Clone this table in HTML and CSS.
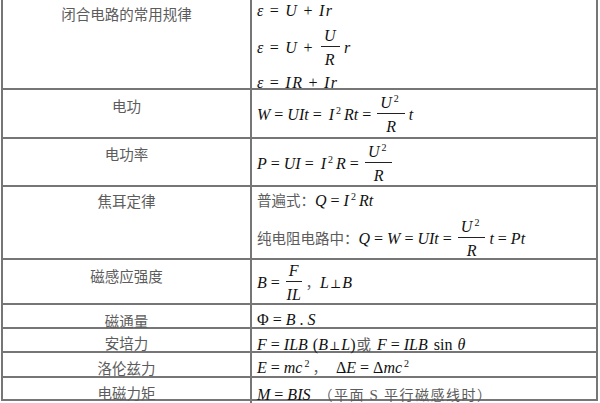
FILE: index.html
```html
<!DOCTYPE html>
<html>
<head>
<meta charset="utf-8">
<link rel="stylesheet" href="styles.css">
</head>
<body>
<div class="tbl">
  <div class="row r1">
    <div class="lc p6">闭合电路的常用规律</div>
    <div class="rc m t2 wide">
      <div class="ln"><i>ε</i><span class="op">=</span><i>U</i><span class="op">+</span><i>Ir</i></div>
      <div class="ln g9"><i>ε</i><span class="op">=</span><i>U</i><span class="op">+</span><span class="frac"><span class="num"><i>U</i></span><span class="den"><i>R</i></span></span><i>r</i></div>
      <div class="ln g7"><i>ε</i><span class="op">=</span><i>IR</i><span class="op">+</span><i>Ir</i></div>
    </div>
  </div>
  <div class="row r2">
    <div class="lc p8">电功</div>
    <div class="rc m t6">
      <div class="ln"><i>W</i><span class="op">=</span><i>UIt</i><span class="op">=</span><i class="pre">I</i><sup class="s">2</sup><i>Rt</i><span class="op">=</span><span class="frac"><span class="num"><i>U</i><sup class="s">2</sup></span><span class="den"><i>R</i></span></span><i>t</i></div>
    </div>
  </div>
  <div class="row r3">
    <div class="lc p7">电功率</div>
    <div class="rc m t6">
      <div class="ln"><i>P</i><span class="op">=</span><i>UI</i><span class="op">=</span><i class="pre">I</i><sup class="s">2</sup><i>R</i><span class="op">=</span><span class="frac"><span class="num"><i>U</i><sup class="s">2</sup></span><span class="den"><i>R</i></span></span></div>
    </div>
  </div>
  <div class="row r4">
    <div class="lc p6">焦耳定律</div>
    <div class="rc m t4">
      <div class="ln"><span class="cn">普遍式：</span><i>Q</i><span class="op">=</span><i>I</i><sup class="s">2</sup><i>Rt</i></div>
      <div class="ln g10"><span class="cn">纯电阻电路中：</span><i>Q</i><span class="op">=</span><i>W</i><span class="op">=</span><i>UIt</i><span class="op">=</span><span class="frac"><span class="num"><i>U</i><sup class="s">2</sup></span><span class="den"><i>R</i></span></span><i>t</i><span class="op">=</span><i>Pt</i></div>
    </div>
  </div>
  <div class="row r5">
    <div class="lc p8">磁感应强度</div>
    <div class="rc m t4">
      <div class="ln"><i>B</i><span class="op">=</span><span class="frac"><span class="num"><i>F</i></span><span class="den"><i>IL</i></span></span><span class="cn">，</span><i>L</i><span class="perp">⊥</span><i>B</i></div>
    </div>
  </div>
  <div class="row r6">
    <div class="lc p8">磁通量</div>
    <div class="rc m t6">
      <div class="ln">Φ<span class="op">=</span><i>B</i> . <i>S</i></div>
    </div>
  </div>
  <div class="row r7">
    <div class="lc p6">安培力</div>
    <div class="rc m t6">
      <div class="ln"><i>F</i><span class="op">=</span><i>ILB</i><span class="paren">(</span><i>B</i><span class="perp">⊥</span><i>L</i>)<span class="cn huo">或</span><i>F</i><span class="op">=</span><i>ILB</i><span class="fn">sin</span><i>θ</i></div>
    </div>
  </div>
  <div class="row r8">
    <div class="lc p7">洛伦兹力</div>
    <div class="rc m t5">
      <div class="ln"><i>E</i><span class="op">=</span><i>mc</i><sup class="s">2</sup><span class="cn comma">，</span>Δ<i>E</i><span class="op">=</span>Δ<i>mc</i><sup class="s">2</sup></div>
    </div>
  </div>
  <div class="row r9">
    <div class="lc p7">电磁力矩</div>
    <div class="rc m t7">
      <div class="ln"><i>M</i><span class="op">=</span><i>BIS</i><span class="cn note">（平面 <span class="ser">S</span> 平行磁感线时）</span></div>
    </div>
  </div>
</div>
</body>
</html>
```

FILE: styles.css
```css
* { box-sizing: border-box; }
html, body { margin: 0; padding: 0; background: #fff; }
body { width: 600px; height: 403px; overflow: hidden; }

.tbl {
  margin: -2px 0 0 1px;
  width: 597px;
  border: 2px solid #767676;
  border-bottom: none;
}
.row {
  display: grid;
  grid-template-columns: 249px 1fr;
  border-bottom: 2px solid #767676;
}
.r1 { height: 90px; }
.r2 { height: 49px; }
.r3 { height: 48px; }
.r4 { height: 73px; }
.r5 { height: 45px; }
.r6 { height: 24px; }
.r7 { height: 24px; }
.r8 { height: 25px; }
.r9 { height: 23px; }

.lc {
  border-right: 2px solid #767676;
  text-align: center;
  font-family: "Noto Sans CJK SC", sans-serif;
  font-size: 14.5px;
  line-height: 16px;
  color: #5c5c5c;
  white-space: nowrap;
}
.p6 { padding-top: 6px; }
.p7 { padding-top: 7px; }
.p8 { padding-top: 8px; }

.rc { padding-left: 5px; white-space: nowrap; }
.t2 { padding-top: 2px; }
.t4 { padding-top: 4px; }
.t5 { padding-top: 5px; }
.t6 { padding-top: 6px; }
.t7 { padding-top: 7px; }
.g7 { margin-top: 7px; }
.g9 { margin-top: 9px; }
.g10 { margin-top: 10px; }

.m {
  font-family: "Liberation Serif", "DejaVu Serif", serif;
  font-size: 16px;
  color: #111;
}
.ln { line-height: 18px; }
i { font-style: italic; }
.op { margin: 0 4px; }
.wide { letter-spacing: 1.5px; }
.wide .op { margin: 0 5px; }
.pre { margin-left: 3px; }
.s { font-size: 10px; vertical-align: 6px; line-height: 0; margin: 0 3px 0 2px; }
.perp { font-family: "DejaVu Serif", serif; font-size: 12px; margin: 0 1px; }
.paren { margin-left: 5px; }
.huo { margin: 0 6px 0 1px; }
.fn { margin: 0 5px 0 6px; }
.comma { margin-right: 9px; }

.frac {
  display: inline-flex;
  flex-direction: column;
  align-items: stretch;
  text-align: center;
  vertical-align: 12px;
  margin: 0 4px 0 2px;
}
.num { line-height: 14px; padding: 0 3px 3px; border-bottom: 1px solid #222; }
.den { line-height: 14px; padding-top: 6px; }

.cn {
  font-family: "Noto Sans CJK SC", sans-serif;
  font-size: 14.5px;
  color: #5c5c5c;
  letter-spacing: 0;
}
.note { font-size: 14px; margin-left: 8px; letter-spacing: 1.5px; }
.ser { font-family: "Liberation Serif", serif; font-size: 15px; }
```
